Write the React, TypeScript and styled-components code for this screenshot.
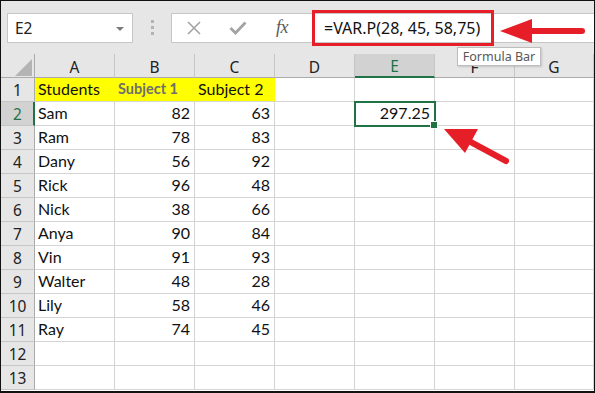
import styled, { createGlobalStyle } from "styled-components";

const GREEN = "#217346";
const RED = "#e61e27";

const GlobalStyle = createGlobalStyle`
  html, body { margin: 0; padding: 0; background: #fff; }
  * { box-sizing: border-box; }
`;

const Frame = styled.div`
  position: relative;
  width: 595px;
  height: 393px;
  overflow: hidden;
  background: #fff;
  border: 1px solid #111;
  border-bottom-width: 2px;
  font-family: "Noto Sans", "Open Sans", sans-serif;
`;

const Toolbar = styled.div`
  height: 53px;
  background: #e6e6e6;
  display: flex;
  align-items: center;
  padding-left: 6px;
`;

const NameBox = styled.div`
  position: relative;
  width: 126px;
  height: 30px;
  background: #fff;
  border: 1px solid #c6c6c6;
  display: flex;
  align-items: center;
  padding-left: 7px;
  font-size: 15.5px;
  color: #222;
`;

const DropCaret = styled.span`
  position: absolute;
  right: 8px;
  top: 13px;
  width: 0;
  height: 0;
  border-left: 4px solid transparent;
  border-right: 4px solid transparent;
  border-top: 4px solid #7a7a7a;
`;

const Grip = styled.div`
  width: 38px;
  display: flex;
  flex-direction: column;
  align-items: center;
  gap: 3px;
`;

const GripDot = styled.span`
  width: 3px;
  height: 3px;
  background: #b3b3b3;
`;

const FormulaBox = styled.div`
  flex: 1;
  height: 30px;
  background: #fff;
  border: 1px solid #c6c6c6;
  border-right: none;
  display: flex;
  align-items: center;
`;

const IconButton = styled.div`
  width: 44px;
  height: 100%;
  display: flex;
  align-items: center;
  justify-content: center;
  color: #a3a3a3;
`;

const Fx = styled.span`
  font-family: "Liberation Serif", "DejaVu Serif", serif;
  font-style: italic;
  font-size: 18px;
  color: #5a5a5a;
  letter-spacing: -0.5px;
`;

const FormulaText = styled.div`
  padding-left: 20px;
  font-size: 16px;
  color: #111;
  white-space: nowrap;
`;

const Sheet = styled.div`
  display: grid;
  grid-template-columns: 34px repeat(6, 80px) 1fr;
  grid-auto-rows: 24px;
`;

const Corner = styled.div`
  background: #e6e6e6;
  border-right: 1px solid #ababab;
  border-bottom: 1px solid #ababab;
  display: flex;
  justify-content: flex-end;
  align-items: flex-end;
  padding: 0 2px 1px 0;
`;

const CornerTriangle = styled.span`
  width: 0;
  height: 0;
  border-left: 17px solid transparent;
  border-bottom: 17px solid #b4b4b4;
`;

const ColHeader = styled.div<{ $active?: boolean }>`
  background: ${(p) => (p.$active ? "#d2d2d2" : "#e6e6e6")};
  color: ${(p) => (p.$active ? GREEN : "#222")};
  border-right: 1px solid #c6c6c6;
  border-bottom: ${(p) => (p.$active ? `2px solid ${GREEN}` : "1px solid #ababab")};
  display: flex;
  align-items: center;
  justify-content: center;
  font-size: 15.5px;
  padding-top: 2px;
`;

const RowHeader = styled.div<{ $active?: boolean }>`
  background: ${(p) => (p.$active ? "#d2d2d2" : "#e6e6e6")};
  color: ${(p) => (p.$active ? GREEN : "#222")};
  border-bottom: 1px solid #c6c6c6;
  border-right: ${(p) => (p.$active ? `2px solid ${GREEN}` : "1px solid #ababab")};
  display: flex;
  align-items: center;
  justify-content: center;
  font-size: 15.5px;
  padding-left: ${(p) => (p.$active ? "1px" : "0")};
`;

const Cell = styled.div<{ $right?: boolean; $fill?: string; $selected?: boolean }>`
  position: relative;
  background: ${(p) => p.$fill || "#fff"};
  border-right: 1px solid ${(p) => p.$fill || "#d4d4d4"};
  border-bottom: 1px solid #d4d4d4;
  display: flex;
  align-items: flex-end;
  justify-content: ${(p) => (p.$right ? "flex-end" : "flex-start")};
  padding: 0 4px 1px 3px;
  font-family: Lato, "Open Sans", sans-serif;
  font-size: 16px;
  line-height: 22px;
  color: #111;
  white-space: nowrap;
  ${(p) =>
    p.$selected &&
    `
    z-index: 2;
    outline: 2px solid ${GREEN};
    outline-offset: -1px;
    &::after {
      content: "";
      position: absolute;
      right: -4px;
      bottom: -4px;
      width: 6px;
      height: 6px;
      background: ${GREEN};
      border: 1px solid #fff;
    }
  `}
`;

const BoldGray = styled.span`
  font-weight: 700;
  font-size: 14.5px;
  color: #6e6e6e;
`;

const Callout = styled.div`
  position: absolute;
  left: 311px;
  top: 9px;
  width: 182px;
  height: 36px;
  border: 3px solid ${RED};
  z-index: 5;
`;

const Tooltip = styled.div`
  position: absolute;
  left: 456px;
  top: 46px;
  width: 84px;
  height: 19px;
  background: #fff;
  border: 1px solid #bdbdbd;
  box-shadow: 1px 1px 2px rgba(0, 0, 0, 0.15);
  font-size: 12.5px;
  color: #575757;
  display: flex;
  align-items: center;
  justify-content: center;
  z-index: 4;
`;

const ArrowSvg = styled.svg`
  position: absolute;
  left: 0;
  top: 0;
  z-index: 6;
  pointer-events: none;
`;

const columns = ["A", "B", "C", "D", "E", "F", "G"];

const data: [string, number, number][] = [
  ["Sam", 82, 63],
  ["Ram", 78, 83],
  ["Dany", 56, 92],
  ["Rick", 96, 48],
  ["Nick", 38, 66],
  ["Anya", 90, 84],
  ["Vin", 91, 93],
  ["Walter", 48, 28],
  ["Lily", 58, 46],
  ["Ray", 74, 45],
];

function Row({ n }: { n: number }) {
  const active = n === 2;
  const cells = [];
  for (let c = 0; c < 7; c++) {
    if (n === 1 && c < 3) {
      const label = ["Students", "", "Subject 2"][c];
      cells.push(
        <Cell key={c} $fill="#ffff00">
          {c === 1 ? <BoldGray>Subject 1</BoldGray> : label}
        </Cell>
      );
      continue;
    }
    const rec = n >= 2 && n <= 11 ? data[n - 2] : null;
    if (rec && c === 0) cells.push(<Cell key={c}>{rec[0]}</Cell>);
    else if (rec && (c === 1 || c === 2)) cells.push(<Cell key={c} $right>{rec[c]}</Cell>);
    else if (n === 2 && c === 4) cells.push(<Cell key={c} $right $selected>297.25</Cell>);
    else cells.push(<Cell key={c} />);
  }
  return (
    <>
      <RowHeader $active={active}>{n}</RowHeader>
      {cells}
    </>
  );
}

export default function App() {
  return (
    <>
      <GlobalStyle />
      <Frame>
        <Toolbar>
          <NameBox>
            E2
            <DropCaret />
          </NameBox>
          <Grip>
            <GripDot />
            <GripDot />
            <GripDot />
          </Grip>
          <FormulaBox>
            <IconButton>
              <svg width="16" height="14" viewBox="0 0 16 14">
                <path d="M2 1 L14 13 M14 1 L2 13" stroke="currentColor" strokeWidth="1.6" fill="none" />
              </svg>
            </IconButton>
            <IconButton>
              <svg width="18" height="14" viewBox="0 0 18 14">
                <path d="M1.5 7 L6.5 12 L16.5 1.5" stroke="currentColor" strokeWidth="2.8" fill="none" />
              </svg>
            </IconButton>
            <IconButton>
              <Fx>fx</Fx>
            </IconButton>
            <FormulaText>=VAR.P(28, 45, 58,75)</FormulaText>
          </FormulaBox>
        </Toolbar>
        <Sheet>
          <Corner>
            <CornerTriangle />
          </Corner>
          {columns.map((c) => (
            <ColHeader key={c} $active={c === "E"}>
              {c}
            </ColHeader>
          ))}
          {Array.from({ length: 13 }, (_, i) => (
            <Row key={i} n={i + 1} />
          ))}
        </Sheet>

        <Callout />
        <Tooltip>Formula Bar</Tooltip>
        <ArrowSvg width="595" height="393" viewBox="0 0 595 393">
          <path d="M581 30 L528 30" stroke={RED} strokeWidth="6" strokeLinecap="round" />
          <path d="M499 30 L531 18 L531 42 Z" fill={RED} />
          <path d="M505 160 L466 139" stroke={RED} strokeWidth="6" strokeLinecap="round" />
          <path d="M443 128 L477 128 L464 152 Z" fill={RED} />
        </ArrowSvg>
      </Frame>
    </>
  );
}
